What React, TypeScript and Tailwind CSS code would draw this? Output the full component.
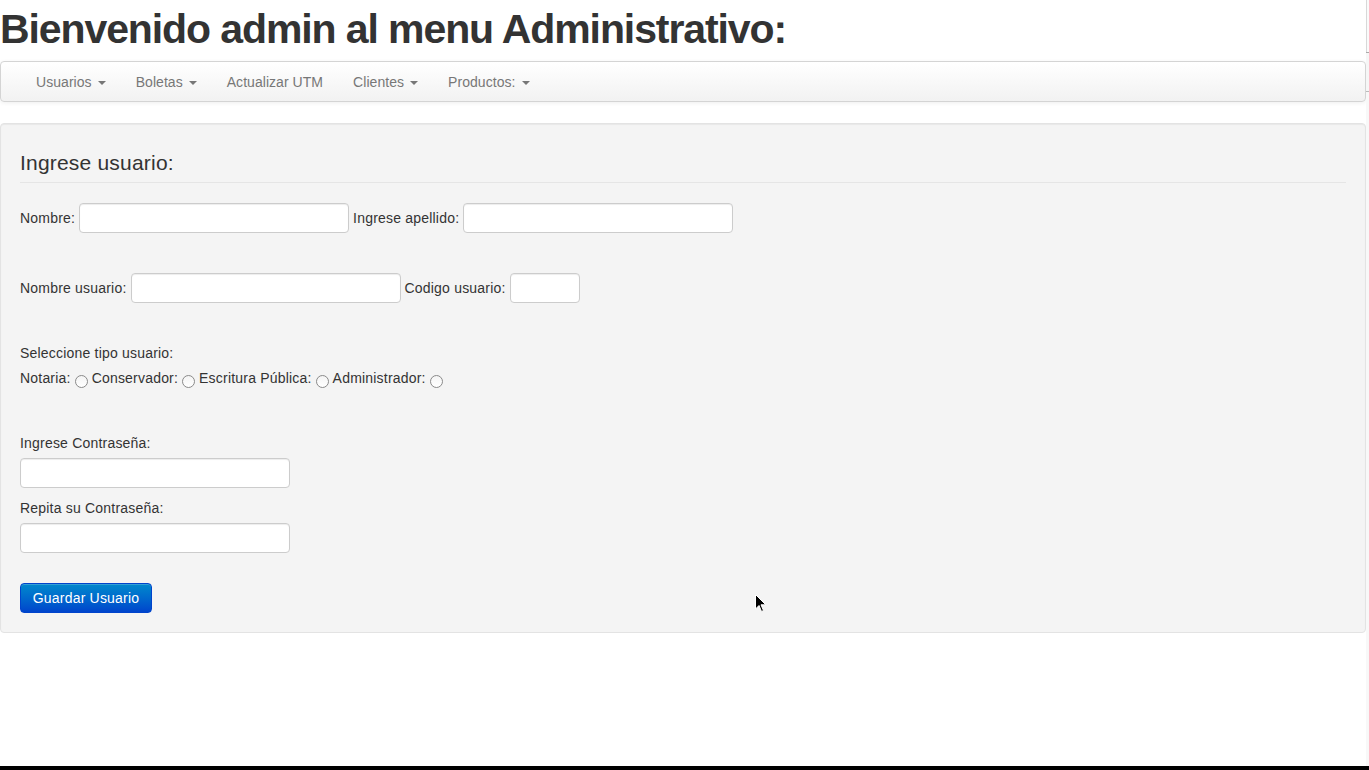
import React from "react";

const Caret = () => (
  <span className="inline-block ml-[6px] mt-[2px] w-0 h-0 border-l-[4px] border-r-[4px] border-t-[4px] border-l-transparent border-r-transparent border-t-[#777]" />
);

const Radio = () => (
  <span className="inline-block w-[13px] h-[13px] rounded-full border border-[#8a8a8a] bg-gradient-to-b from-[#f4f4f4] to-white mx-[4px] translate-y-[3px]" />
);

const Input = ({ w }: { w: string }) => (
  <span className={`inline-block ${w} h-[30px] bg-white border border-[#cccccc] rounded-[4px] shadow-[inset_0_1px_1px_rgba(0,0,0,0.075)]`} />
);

export default function App() {
  const navItems: { label: string; caret: boolean }[] = [
    { label: "Usuarios", caret: true },
    { label: "Boletas", caret: true },
    { label: "Actualizar UTM", caret: false },
    { label: "Clientes", caret: true },
    { label: "Productos:", caret: true },
  ];
  return (
    <div
      className="relative w-[1369px] h-[770px] bg-white text-[#333] overflow-hidden"
      style={{ fontFamily: '"Liberation Sans", Arial, sans-serif' }}
    >
      <div className="flex h-[766px]">
        <div className="w-[1366px]">
          <h1 className="h-[61px] pt-[7px] text-[41px] leading-[44px] font-bold text-[#333] tracking-[-1.1px]">
            Bienvenido admin al menu Administrativo:
          </h1>
          <div className="h-[41px] w-[1366px] border border-[#d4d4d4] rounded-[4px] bg-gradient-to-b from-white to-[#f2f2f2] shadow-[0_1px_4px_rgba(0,0,0,0.065)] pl-[20px] flex items-center">
            {navItems.map((n) => (
              <div key={n.label} className="px-[15px] flex items-center text-[14px] text-[#777] leading-[20px] tracking-[0.05px]">
                <span>{n.label}</span>
                {n.caret && <Caret />}
              </div>
            ))}
          </div>
          <div className="mt-[21px] w-[1366px] h-[510px] bg-[#f4f4f4] border border-[#e3e3e3] rounded-[4px] shadow-[inset_0_1px_1px_rgba(0,0,0,0.05)] px-[19px] pt-[19px] text-[14px] tracking-[0.2px]">
            <div className="h-[40px] leading-[39px] text-[21px] text-[#333] border-b border-[#e5e5e5] tracking-[0.2px]">
              Ingrese usuario:
            </div>
            <div className="mt-[20px] flex items-center h-[30px]">
              <span className="mr-[4px]">Nombre:</span>
              <Input w="w-[270px]" />
              <span className="ml-[4px] mr-[4px]">Ingrese apellido:</span>
              <Input w="w-[270px]" />
            </div>
            <div className="mt-[40px] flex items-center h-[30px]">
              <span className="mr-[4px]">Nombre usuario:</span>
              <Input w="w-[270px]" />
              <span className="ml-[4px] mr-[4px]">Codigo usuario:</span>
              <Input w="w-[70px]" />
            </div>
            <div className="mt-[40px] leading-[20px] h-[20px]">Seleccione tipo usuario:</div>
            <div className="mt-[5px] leading-[20px] h-[20px] flex items-center">
              <span>Notaria:</span>
              <Radio />
              <span>Conservador:</span>
              <Radio />
              <span>Escritura Pública:</span>
              <Radio />
              <span>Administrador:</span>
              <Radio />
            </div>
            <div className="mt-[45px] leading-[20px] h-[20px]">Ingrese Contraseña:</div>
            <div className="mt-[5px] h-[30px] flex">
              <Input w="w-[270px]" />
            </div>
            <div className="mt-[10px] leading-[20px] h-[20px]">Repita su Contraseña:</div>
            <div className="mt-[5px] h-[30px] flex">
              <Input w="w-[270px]" />
            </div>
            <div className="mt-[30px]">
              <button className="h-[30px] w-[132px] rounded-[4px] text-white text-[14px] tracking-[0.2px] bg-gradient-to-b from-[#0088cc] to-[#0044cc] border border-[#0044cc] shadow-[inset_0_1px_0_rgba(255,255,255,0.2)]">
                Guardar Usuario
              </button>
            </div>
          </div>
        </div>
        <div className="w-[3px] flex flex-col">
          <div className="h-[52px] border-l border-[#d8d8d8] bg-[#fafafa]" />
          <div className="h-[1px] bg-[#aaa]" />
          <div className="h-[38px] bg-[#f6f6f6]" />
          <div className="h-[1px] bg-[#bbb]" />
          <div className="flex-1 bg-[#f8f8f8]" />
        </div>
      </div>
      <div className="h-[4px] bg-black" />
      <svg className="absolute left-[755px] top-[594px]" width="12" height="19" viewBox="0 0 12 19">
        <path d="M0.5 0.5 L0.5 15 L4 11.5 L6.5 17.5 L8.5 16.5 L6 10.8 L10.8 10.8 Z" fill="#000" stroke="#fff" strokeWidth="1" />
      </svg>
    </div>
  );
}
